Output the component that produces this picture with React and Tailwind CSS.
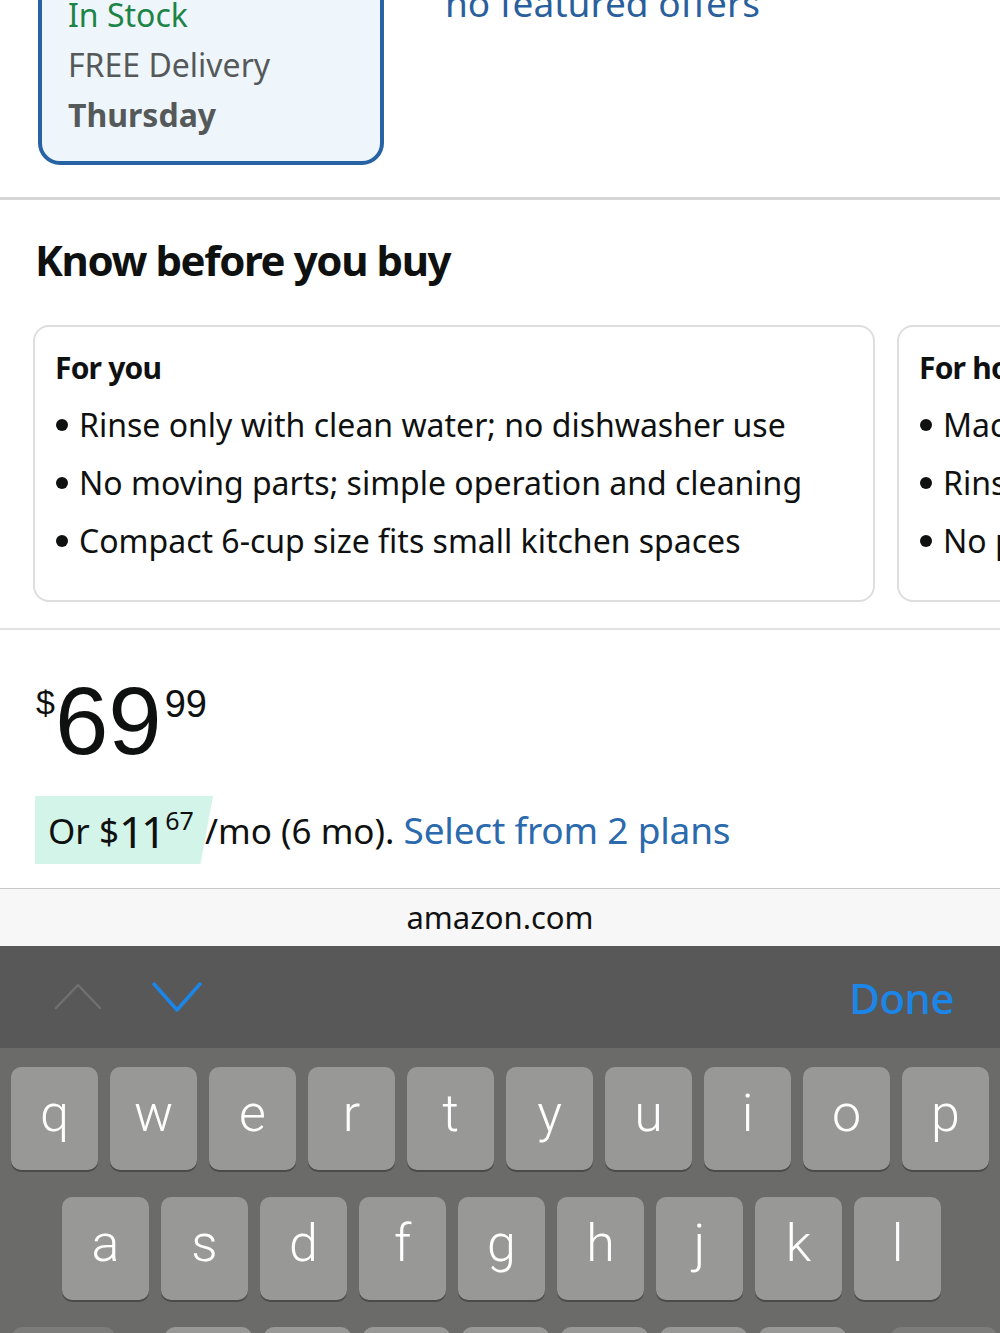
const SANS = "font-['Noto_Sans',sans-serif]";

const row1 = ['q', 'w', 'e', 'r', 't', 'y', 'u', 'i', 'o', 'p'];
const row2 = ['a', 's', 'd', 'f', 'g', 'h', 'j', 'k', 'l'];
const row3 = ['z', 'x', 'c', 'v', 'b', 'n', 'm'];

const notes = [
  {
    title: 'For you',
    items: [
      'Rinse only with clean water; no dishwasher use',
      'No moving parts; simple operation and cleaning',
      'Compact 6-cup size fits small kitchen spaces',
    ],
  },
  {
    title: 'For home',
    items: [
      'Machine-free brewing, no electricity needed',
      'Rinse the filter right after every use',
      'No paper filters required',
    ],
  },
];

function NoteCard({ note }) {
  return (
    <div className="w-[842px] shrink-0 rounded-[16px] border-2 border-[#dedede] bg-white pb-[30px] pl-[20px] pt-[21px]">
      <p className="text-[30px] font-bold leading-[40px] tracking-[-0.8px] text-[#0f1111]">{note.title}</p>
      <ul className="mt-[8px]">
        {note.items.map((item) => (
          <li key={item} className="flex items-center whitespace-nowrap text-[32px] leading-[58px] text-[#0f1111]">
            <span className="mr-[11px] ml-[1px] h-[12px] w-[12px] shrink-0 rounded-full bg-[#0f1111]" />
            {item}
          </li>
        ))}
      </ul>
    </div>
  );
}

function Key({ label, dark = false, w = 'w-[87px]' }) {
  return (
    <div
      className={`flex h-[103px] ${w} items-center justify-center rounded-[10px] pb-[10px] font-['Roboto',sans-serif] text-[52px] font-light text-white shadow-[0_2px_0_#4b4b4a] ${
        dark ? 'bg-[#7c7c7a]' : 'bg-[#989896]'
      }`}
    >
      {label}
    </div>
  );
}

export default function App() {
  return (
    <div className={`${SANS} flex h-[1333px] w-[1000px] flex-col overflow-hidden bg-white`}>
      {/* delivery box + offers */}
      <section className="flex h-[197px] shrink-0 items-start overflow-hidden">
        <div className="ml-[38px] mt-[-40px] w-[346px] rounded-[22px] border-4 border-[#2762a3] bg-[#eef6fc] pb-[21px] pl-[26px] pt-[26px] text-[32px] leading-[50px]">
          <p className="text-[#1d8447]">In Stock</p>
          <p className="text-[#565959]">FREE Delivery</p>
          <p className="font-bold text-[#565959]">Thursday</p>
        </div>
        <p className="ml-[61px] mt-[-17px] text-[37px] leading-[40px] text-[#2a5f9d]">no featured offers</p>
      </section>
      <div className="h-[3px] shrink-0 bg-[#d6d6d6]" />

      {/* know before you buy */}
      <section className="shrink-0 pt-[35px]">
        <h2 className="pl-[35px] text-[42px] font-bold leading-[50px] tracking-[-1.4px] text-[#0f1111]">Know before you buy</h2>
        <div className="mt-[40px] flex gap-[22px] overflow-hidden pl-[33px]">
          {notes.map((n) => (
            <NoteCard key={n.title} note={n} />
          ))}
        </div>
      </section>
      <div className="mt-[26px] h-[2px] shrink-0 bg-[#e2e2e2]" />

      {/* price */}
      <section className="shrink-0">
        <div className="flex items-start pl-[36px] pt-[43px] font-['Liberation_Sans',sans-serif] text-[#0f1111]">
          <span className="mt-[12px] text-[34px] leading-none">$</span>
          <span className="text-[96px] leading-none">69</span>
          <span className="ml-[3px] mt-[12px] text-[38px] leading-none">99</span>
        </div>
        <div className="ml-[35px] mt-[27px] flex h-[68px] items-center whitespace-nowrap text-[35px] leading-[40px] text-[#0f1111]">
          <div className="flex h-full w-[178px] shrink-0 items-center bg-[#d3f4e8] pl-[13px] [clip-path:polygon(0_0,100%_0,93%_100%,0_100%)]">
            <p>
              Or $<span className="relative top-[4px] text-[44px] tracking-[-3px]">11</span>
              <span className="relative top-[-14px] ml-[2px] text-[25px]">67</span>
            </p>
          </div>
          <p className="ml-[-8px]">
            /mo (6 mo). <span className="text-[37px] tracking-[-0.2px] text-[#2a6aad]">Select from 2 plans</span>
          </p>
        </div>
      </section>

      {/* safari address bar */}
      <div className="mt-[24px] h-[1px] shrink-0 bg-[#c9c9c9]" />
      <div className="flex h-[57px] shrink-0 items-center justify-center bg-[#f7f7f7] text-[31px] text-[#111]">amazon.com</div>

      {/* keyboard accessory */}
      <div className="flex h-[102px] shrink-0 items-center bg-[#585858] pl-[54px] pr-[46px]">
        <svg width="48" height="30" viewBox="0 0 48 30" fill="none" stroke="#707070" strokeWidth="2.5" strokeLinecap="round" strokeLinejoin="round">
          <path d="M2 26 L24 3 L46 26" />
        </svg>
        <svg className="ml-[50px]" width="50" height="32" viewBox="0 0 50 32" fill="none" stroke="#1c86e8" strokeWidth="3.5" strokeLinecap="round" strokeLinejoin="round">
          <path d="M2 3 L25 29 L48 3" />
        </svg>
        <span className="ml-auto text-[42px] font-medium tracking-[-0.5px] text-[#1c86e8]">Done</span>
      </div>

      {/* keyboard */}
      <div className="flex flex-1 flex-col gap-[27px] bg-[#6b6b69] pt-[19px]">
        <div className="flex justify-center gap-[12px]">
          {row1.map((k) => (
            <Key key={k} label={k} />
          ))}
        </div>
        <div className="flex gap-[12px] pl-[62px]">
          {row2.map((k) => (
            <Key key={k} label={k} />
          ))}
        </div>
        <div className="flex gap-[12px] pl-[12px]">
          <Key label="" dark w="w-[103px]" />
          <div className="ml-[38px] flex gap-[12px]">
            {row3.map((k) => (
              <Key key={k} label={k} />
            ))}
          </div>
          <div className="ml-[33px]">
            <Key label="" dark w="w-[106px]" />
          </div>
        </div>
      </div>
    </div>
  );
}
